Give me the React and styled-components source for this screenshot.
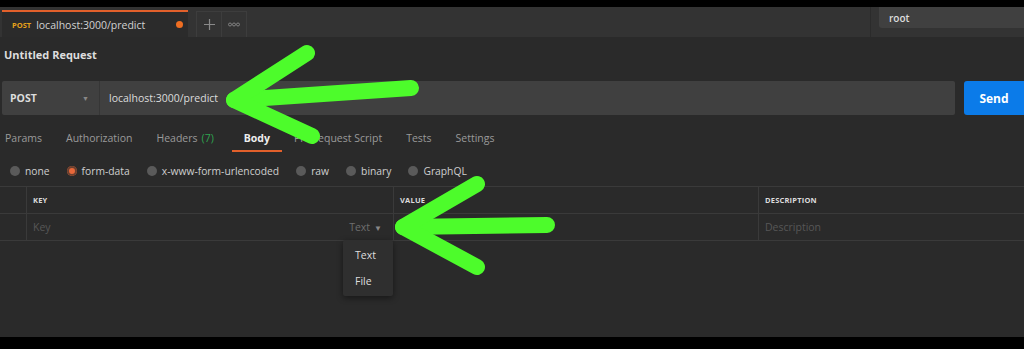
import React from "react";
import styled, { createGlobalStyle } from "styled-components";

const GlobalStyle = createGlobalStyle`
  html, body {
    margin: 0;
    padding: 0;
    background: #000;
  }
  body {
    font-family: "Open Sans", "Liberation Sans", sans-serif;
    -webkit-font-smoothing: antialiased;
  }
`;

const Page = styled.div`
  position: relative;
  width: 1024px;
  height: 349px;
  padding-top: 7px;
  box-sizing: border-box;
  background: #000;
  overflow: hidden;
`;

const Window = styled.div`
  height: 330px;
  background: #2a2a2a;
  display: flex;
  flex-direction: column;
  overflow: hidden;
`;

const TabBar = styled.div`
  height: 30px;
  background: #333;
  display: flex;
  align-items: flex-end;
  padding-left: 2px;
  flex-shrink: 0;
`;

const ActiveTab = styled.div`
  width: 186px;
  height: 27px;
  box-sizing: border-box;
  background: #2b2b2b;
  border-top: 2px solid #e2602b;
  display: flex;
  align-items: center;
  padding: 0 5px 0 10px;
`;

const Method = styled.span`
  font-size: 7.5px;
  font-weight: 700;
  color: ${({ color }) => color || "#ddd"};
  margin-right: 5px;
`;

const TabTitle = styled.span`
  font-size: 10.5px;
  color: #d2d2d2;
  flex: 1;
`;

const Dot = styled.span`
  width: 7px;
  height: 7px;
  border-radius: 50%;
  background: #ef6e22;
`;

const TabTools = styled.div`
  display: flex;
  margin-left: 8px;
  height: 26px;
`;

const ToolBox = styled.div`
  width: 26px;
  height: 26px;
  box-sizing: border-box;
  border: 1px solid #3d3d3d;
  border-bottom: none;
  margin-left: ${({ joined }) => (joined ? "-1px" : "0")};
  display: flex;
  align-items: center;
  justify-content: center;
  color: #8a8a8a;
`;

const Spacer = styled.div`
  flex: 1;
`;

const EnvArea = styled.div`
  align-self: stretch;
  width: 145px;
  border-left: 1px solid #2b2b2b;
  padding-left: 8px;
`;

const EnvBox = styled.div`
  height: 21px;
  background: #404040;
  border-radius: 0 0 0 3px;
  display: flex;
  align-items: center;
  padding-left: 10px;
  font-size: 10px;
  font-weight: 600;
  color: #ddd;
`;

const Content = styled.div`
  padding-left: 2px;
  display: flex;
  flex-direction: column;
  flex: 1;
`;

const Title = styled.div`
  font-size: 11px;
  font-weight: 700;
  color: #ddd;
  line-height: 16px;
  margin-top: 10px;
  padding-left: 2px;
`;

const UrlRow = styled.div`
  display: flex;
  gap: 9px;
  margin-top: 18px;
  height: 34px;
`;

const UrlBar = styled.div`
  flex: 1;
  background: #404040;
  border-radius: 2px;
  display: flex;
  align-items: center;
`;

const MethodSelect = styled.div`
  width: 98px;
  height: 100%;
  box-sizing: border-box;
  border-right: 1px solid #363636;
  display: flex;
  align-items: center;
  justify-content: space-between;
  padding: 0 10px 0 8px;
  font-size: 10.5px;
  font-weight: 700;
  color: #ddd;
`;

const Caret = styled.span`
  font-size: ${({ dim }) => (dim ? "8px" : "7px")};
  color: ${({ dim }) => (dim ? "#888" : "#888")};
  margin-left: ${({ gap }) => gap || 0}px;
`;

const UrlText = styled.span`
  padding-left: 9px;
  font-size: 10.5px;
  color: #dcdcdc;
`;

const SendButton = styled.div`
  width: 60px;
  flex-shrink: 0;
  background: #0b7be9;
  border-radius: 3px 0 0 3px;
  display: flex;
  align-items: center;
  justify-content: center;
  font-size: 12px;
  font-weight: 700;
  color: #fff;
`;

const SubTabs = styled.div`
  display: flex;
  gap: 24px;
  margin-top: 13px;
  padding-left: 3px;
  height: 24px;
  align-items: stretch;
`;

const SubTab = styled.div`
  position: relative;
  display: flex;
  align-items: center;
  padding-bottom: 4px;
  margin-left: ${({ active }) => (active ? "6px" : "0")};
  font-size: 10.5px;
  font-weight: ${({ active }) => (active ? 700 : 400)};
  color: ${({ active }) => (active ? "#eee" : "#9a9a9a")};

  &::after {
    content: "";
    display: ${({ active }) => (active ? "block" : "none")};
    position: absolute;
    left: -12px;
    right: -12px;
    bottom: 0;
    height: 2px;
    background: #e2602b;
  }
`;

const Count = styled.span`
  color: #2ea44f;
  margin-left: 4px;
`;

const RadioRow = styled.div`
  display: flex;
  align-items: center;
  gap: 17px;
  margin-top: 8px;
  padding-left: 8px;
  height: 22px;
`;

const RadioOption = styled.label`
  display: flex;
  align-items: center;
  gap: 5px;
  font-size: 10.3px;
  color: #cfcfcf;
`;

const RadioDot = styled.span`
  width: 10px;
  height: 10px;
  border-radius: 50%;
  background: ${({ checked }) => (checked ? "#e8683a" : "#5a5a5a")};
  box-shadow: ${({ checked }) =>
    checked ? "inset 0 0 0 2px #6a4030" : "none"};
`;

const Table = styled.div`
  margin-top: 4px;
  margin-left: -2px;
  border-top: 1px solid #3a3a3a;
  position: relative;
`;

const Row = styled.div`
  display: grid;
  grid-template-columns: 26px 367px 365px 1fr;
  height: 26px;
  border-bottom: 1px solid #3a3a3a;
`;

const Cell = styled.div`
  border-left: ${({ first }) => (first ? "none" : "1px solid #3a3a3a")};
  display: flex;
  align-items: center;
  justify-content: ${({ split }) => (split ? "space-between" : "flex-start")};
  padding: 0 11px 0 6px;
`;

const HeadText = styled.span`
  font-size: 7.5px;
  font-weight: 700;
  color: #dcdcdc;
  letter-spacing: 0.2px;
`;

const Placeholder = styled.span`
  font-size: 10.5px;
  color: ${({ light }) => (light ? "#6e6e6e" : "#575757")};
`;

const Menu = styled.div`
  position: absolute;
  left: 343px;
  top: 53px;
  width: 50px;
  padding: 2px 0;
  background: #2f2f2f;
  border-radius: 2px;
  box-shadow: 0 2px 6px rgba(0, 0, 0, 0.45);
`;

const MenuItem = styled.div`
  height: 26px;
  display: flex;
  align-items: center;
  padding-left: 12px;
  font-size: 10.5px;
  color: #dedede;
`;

const Overlay = styled.svg`
  position: absolute;
  left: 0;
  top: 0;
  pointer-events: none;
`;

const subTabs = [
  "Params",
  "Authorization",
  "Headers",
  "Body",
  "Pre-request Script",
  "Tests",
  "Settings",
];

const bodyTypes = [
  "none",
  "form-data",
  "x-www-form-urlencoded",
  "raw",
  "binary",
  "GraphQL",
];

const Arrow = ({ tip, tail, up, down }) => (
  <g
    fill="none"
    stroke="#4dfc2b"
    strokeWidth="16"
    strokeLinecap="round"
    strokeLinejoin="round"
  >
    <line x1={tip[0]} y1={tip[1]} x2={tail[0]} y2={tail[1]} />
    <polyline
      points={`${up[0]},${up[1]} ${tip[0]},${tip[1]} ${down[0]},${down[1]}`}
    />
  </g>
);

const App = () => {
  return (
    <Page>
      <GlobalStyle />
      <Window>
        <TabBar>
          <ActiveTab>
            <Method color="#e5a21a">POST</Method>
            <TabTitle>localhost:3000/predict</TabTitle>
            <Dot />
          </ActiveTab>
          <TabTools>
            <ToolBox>
              <svg width="11" height="11" viewBox="0 0 11 11">
                <path d="M5.5 0v11M0 5.5h11" stroke="#8a8a8a" strokeWidth="1.2" />
              </svg>
            </ToolBox>
            <ToolBox joined>
              <svg width="12" height="5" viewBox="0 0 12 5">
                <g fill="none" stroke="#8a8a8a" strokeWidth="0.9">
                  <circle cx="2" cy="2.5" r="1.5" />
                  <circle cx="6" cy="2.5" r="1.5" />
                  <circle cx="10" cy="2.5" r="1.5" />
                </g>
              </svg>
            </ToolBox>
          </TabTools>
          <Spacer />
          <EnvArea>
            <EnvBox>root</EnvBox>
          </EnvArea>
        </TabBar>

        <Content>
          <Title>Untitled Request</Title>
          <UrlRow>
            <UrlBar>
              <MethodSelect>
                POST
                <Caret>▼</Caret>
              </MethodSelect>
              <UrlText>localhost:3000/predict</UrlText>
            </UrlBar>
            <SendButton>Send</SendButton>
          </UrlRow>

          <SubTabs>
            {subTabs.map((t) => (
              <SubTab key={t} active={t === "Body"}>
                {t}
                {t === "Headers" && <Count>(7)</Count>}
              </SubTab>
            ))}
          </SubTabs>

          <RadioRow>
            {bodyTypes.map((t) => (
              <RadioOption key={t}>
                <RadioDot checked={t === "form-data"} />
                {t}
              </RadioOption>
            ))}
          </RadioRow>

          <Table>
            <Row>
              <Cell first />
              <Cell>
                <HeadText>KEY</HeadText>
              </Cell>
              <Cell>
                <HeadText>VALUE</HeadText>
              </Cell>
              <Cell>
                <HeadText>DESCRIPTION</HeadText>
              </Cell>
            </Row>
            <Row>
              <Cell first />
              <Cell split>
                <Placeholder>Key</Placeholder>
                <Placeholder light>
                  Text
                  <Caret dim gap={4}>
                    ▼
                  </Caret>
                </Placeholder>
              </Cell>
              <Cell />
              <Cell>
                <Placeholder>Description</Placeholder>
              </Cell>
            </Row>
            <Menu>
              <MenuItem>Text</MenuItem>
              <MenuItem>File</MenuItem>
            </Menu>
          </Table>
        </Content>
      </Window>

      <Overlay width="1024" height="349" viewBox="0 0 1024 349">
        <Arrow tip={[234, 100]} tail={[411, 88]} up={[307, 53]} down={[312, 136]} />
        <Arrow tip={[403, 227]} tail={[547, 225]} up={[477, 184]} down={[477, 267]} />
      </Overlay>
    </Page>
  );
};

export default App;
